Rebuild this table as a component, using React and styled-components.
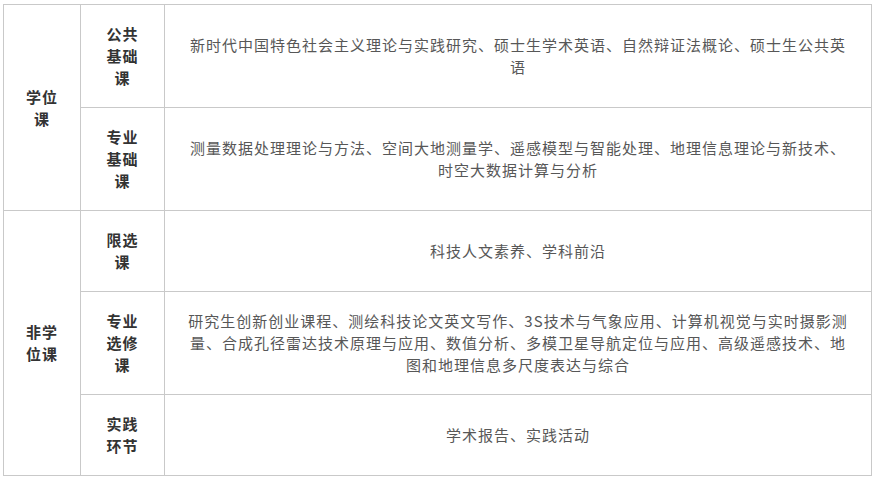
import React from "react";
import styled, { createGlobalStyle } from "styled-components";

const GlobalStyle = createGlobalStyle`
  html, body {
    margin: 0;
    padding: 0;
    background: #ffffff;
  }
  body {
    font-family: "Noto Sans CJK SC", "Liberation Sans", sans-serif;
  }
`;

const Page = styled.div`
  padding: 4px 6px 0 3px;
`;

const Table = styled.table`
  width: 869px;
  border-collapse: collapse;
  table-layout: fixed;
  font-size: 15px;
  letter-spacing: 1px;
  line-height: 22px;
`;

const Cell = styled.td`
  border: 1px solid #c9c9c9;
  text-align: center;
  vertical-align: middle;
  padding: 18px ${(p) => p.$padX}px;
  color: ${(p) => (p.$label ? "#333333" : "#575757")};
  font-weight: ${(p) => (p.$label ? 700 : 400)};
`;

const rows = [
  {
    group: "学位课",
    span: 2,
    label: "公共基础课",
    text: "新时代中国特色社会主义理论与实践研究、硕士生学术英语、自然辩证法概论、硕士生公共英语",
  },
  {
    label: "专业基础课",
    text: "测量数据处理理论与方法、空间大地测量学、遥感模型与智能处理、地理信息理论与新技术、时空大数据计算与分析",
  },
  {
    group: "非学位课",
    span: 3,
    label: "限选课",
    text: "科技人文素养、学科前沿",
  },
  {
    label: "专业选修课",
    text: "研究生创新创业课程、测绘科技论文英文写作、3S技术与气象应用、计算机视觉与实时摄影测量、合成孔径雷达技术原理与应用、数值分析、多模卫星导航定位与应用、高级遥感技术、地图和地理信息多尺度表达与综合",
  },
  {
    label: "实践环节",
    text: "学术报告、实践活动",
  },
];

const App = () => (
  <Page>
    <GlobalStyle />
    <Table>
      <colgroup>
        <col style={{ width: 77 }} />
        <col style={{ width: 84 }} />
        <col />
      </colgroup>
      <tbody>
        {rows.map((row, i) => (
          <tr key={i}>
            {row.group && (
              <Cell $label $padX={20} rowSpan={row.span}>
                {row.group}
              </Cell>
            )}
            <Cell $label $padX={24}>{row.label}</Cell>
            <Cell $padX={20}>{row.text}</Cell>
          </tr>
        ))}
      </tbody>
    </Table>
  </Page>
);

export default App;
